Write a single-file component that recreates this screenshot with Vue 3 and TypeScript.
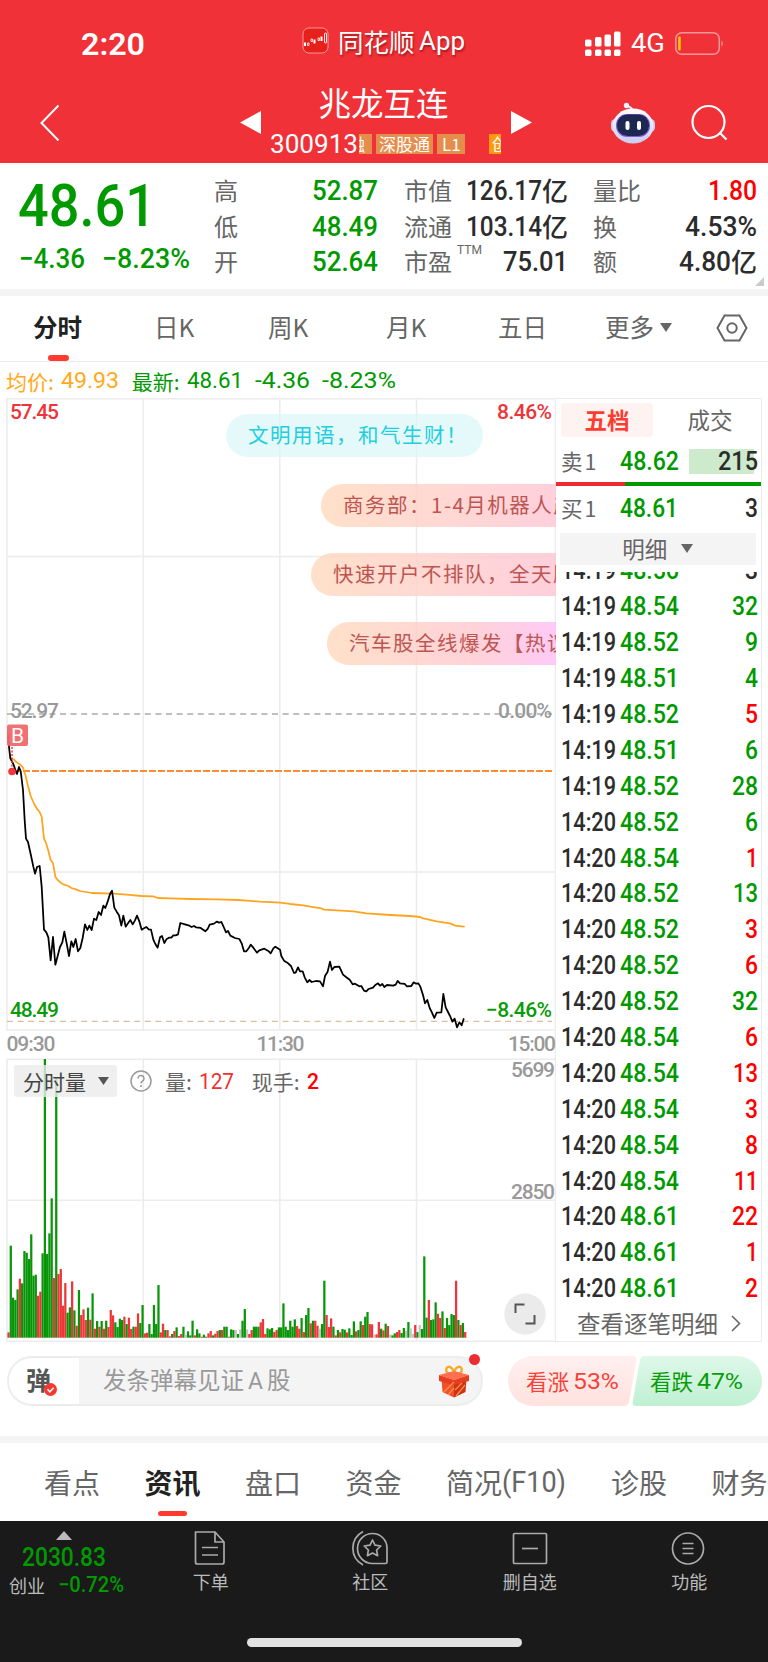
<script setup lang="ts">
import { h, type FunctionalComponent } from 'vue'

interface NumProps { t: string; w: number; s: number; b?: number }

// Condensed numerals: Roboto squeezed to a fixed advance, centred on its cap height.
const Num: FunctionalComponent<NumProps> = (p) =>
  h('svg', { width: p.w, height: p.s, overflow: 'visible', 'font-family': 'Roboto, "Noto Sans CJK SC", sans-serif' }, [
    h('text', {
      x: 0, y: p.s * 0.8555, 'font-size': p.s, 'font-weight': p.b ?? 500,
      fill: 'currentColor', textLength: p.w, lengthAdjust: 'spacingAndGlyphs'
    }, p.t)
  ])
Num.props = ['t', 'w', 's', 'b']

const stats = [
  [
    { k: '高', v: '52.87', w: 66, c: 'down' },
    { k: '低', v: '48.49', w: 66, c: 'down' },
    { k: '开', v: '52.64', w: 66, c: 'down' }
  ],
  [
    { k: '市值', v: '126.17', w: 76, u: '亿' },
    { k: '流通', v: '103.14', w: 76, u: '亿' },
    { k: '市盈', v: '75.01', w: 65, sup: 'TTM' }
  ],
  [
    { k: '量比', v: '1.80', w: 49, c: 'up' },
    { k: '换', v: '4.53%', w: 72 },
    { k: '额', v: '4.80', w: 52, u: '亿' }
  ]
] as { k: string; v: string; w: number; c?: string; u?: string; sup?: string }[][]

type Tick = [string, string, string, string]
const ticks: Tick[] = [
  ['14:19', '48.56', '3', 'ink'],
  ['14:19', '48.54', '32', 'down'], ['14:19', '48.52', '9', 'down'], ['14:19', '48.51', '4', 'down'],
  ['14:19', '48.52', '5', 'up'], ['14:19', '48.51', '6', 'down'], ['14:19', '48.52', '28', 'down'],
  ['14:20', '48.52', '6', 'down'], ['14:20', '48.54', '1', 'up'], ['14:20', '48.52', '13', 'down'],
  ['14:20', '48.52', '3', 'up'], ['14:20', '48.52', '6', 'up'], ['14:20', '48.52', '32', 'down'],
  ['14:20', '48.54', '6', 'up'], ['14:20', '48.54', '13', 'up'], ['14:20', '48.54', '3', 'up'],
  ['14:20', '48.54', '8', 'up'], ['14:20', '48.54', '11', 'up'], ['14:20', '48.61', '22', 'up'],
  ['14:20', '48.61', '1', 'up'], ['14:20', '48.61', '2', 'up']
]
const qtyWidth = (q: string): number => [...q].reduce((n, d) => n + (d === '1' ? 12 : 13), 0)

// Volume per minute: colour letter (r up, g down, n flat) followed by the bar height in thirds of a pixel.
const volume =
  'r16 g276 g120 g113 g145 r177 g163 g260 g255 g236 g310 g186 g189 r126 r138 g253 g836 g251 g313 g418 r179 g778 r191 r206 r96 r164 g75 g91 r169 g82 r36 g143 r68 r85 r53 g90 r54 g133 r27 g50 r33 g50 r27 g51 r32 r83 r67 g46 g32 g57 g53 r63 g41 r60 r26 g33 r33 r73 g44 g98 r13 r15 g41 g11 g98 g41 g158 r16 r42 g23 r23 r4 g11 r20 g31 r5 r11 g33 n8 g19 g7 g51 r7 g25 g13 r3 g9 g3 r13 r20 g7 r12 r20 g23 r23 g33 g33 r3 g25 g23 n23 g11 n25 g51 g86 n25 r11 r23 g33 g33 g33 r46 r56 r11 g28 g25 g29 r17 r23 g31 g31 g103 g33 g23 g51 g33 g55 r35 r27 g59 r17 g68 g89 r43 g51 r51 r36 n27 g41 g171 r68 r32 r58 g33 r7 g23 r16 g26 g24 r16 g28 g8 g49 r19 g23 g49 r38 g63 g77 r41 r40 n9 r10 r47 g27 r22 g42 r35 n9 g7 g13 r17 r23 g14 g29 n20 g47 n28 n11 r38 g17 n38 g26 g244 g60 r113 g53 g55 g106 r72 r59 g79 r29 g59 g38 g71 g68 r171 g53 r38 g44 r17'
const tone: Record<string, string> = { r: '#ee3538', g: '#089608', n: '#c4c4c4' }
const bars = volume.split(' ').map((v, i) => {
  const hgt = Number(v.slice(1)) / 3
  return { x: 7.4 + i * 2.272, y: 939.7 - hgt, h: hgt, fill: tone[v[0]] }
})

const price =
  '24,136 28,180 31,205 40,222 48,245 51,252 57,231 62,243 69,300 74,390 78,446 84,456 92,492 100,530 105,551 111,531 119,528 125,590 132,719 139,727 145,742 152,811 159,741 166,824 173,798 180,771 187,757 193,725 200,760 207,798 214,754 220,771 227,747 234,784 241,774 248,744 255,703 262,720 268,707 275,720 282,686 289,690 296,666 303,675 310,647 316,654 323,635 330,612 336,602 343,653 350,665 357,676 364,707 370,677 377,710 384,700 391,690 398,703 405,691 411,677 418,694 425,719 432,715 439,711 446,718 453,719 460,749 466,762 473,773 480,742 486,738 493,759 500,747 507,743 514,743 520,736 527,736 534,733 541,699 555,703 568,707 575,711 582,708 588,712 602,714 616,724 623,717 629,704 642,701 650,695 657,698 664,696 671,711 678,727 684,723 691,737 705,744 718,747 725,760 732,784 739,784 746,775 752,764 760,773 771,788 778,781 793,776 805,783 812,790 820,775 826,770 832,774 840,779 844,798 852,812 862,818 873,828 882,849 887,848 894,832 900,844 908,844 914,862 922,877 928,870 935,876 948,873 960,874 969,889 975,858 983,845 990,815 996,840 1003,831 1018,830 1029,854 1038,861 1049,869 1058,883 1065,881 1078,889 1084,888 1092,902 1099,904 1106,897 1119,893 1126,885 1134,880 1140,887 1147,882 1153,891 1161,885 1180,887 1187,884 1193,873 1200,880 1214,882 1221,889 1234,888 1241,877 1248,881 1255,880 1261,890 1269,915 1275,940 1282,930 1289,954 1296,968 1303,984 1310,968 1324,967 1330,912 1337,952 1344,966 1351,980 1357,995 1364,986 1371,1012 1378,997 1385,1006 1391,987'
const average =
  '31,203 42,209 50,217 62,225 69,233 76,254 84,288 92,318 104,345 113,359 119,366 125,380 132,446 138,459 145,482 152,510 159,520 166,560 173,570 182,578 190,583 205,588 214,594 230,599 240,603 275,609 340,611 380,614 425,618 460,619 474,624 510,625 570,627 650,628 715,630 740,632 780,635 840,638 870,642 910,646 945,652 964,655 972,659 1010,661 1060,664 1100,670 1170,675 1230,678 1260,681 1270,685 1310,694 1350,700 1366,707 1392,710'

const pills = [
  { t: '商务部：1-4月机器人产量', left: 321, top: 86, kind: 'warm' },
  { t: '快速开户不排队，全天服务', left: 311, top: 155, kind: 'warm' },
  { t: '汽车股全线爆发【热议】', left: 327, top: 224, kind: 'warm rose' }
]
</script>

<template>
  <div class="page">
    <header class="head">
      <div class="status">
        <div class="clock"><Num t="2:20" :w="64" :s="32" :b="600" /></div>
        <div class="brand">
          <svg width="28" height="28" viewBox="0 0 28 28">
            <rect x="1" y="1" width="25" height="25" rx="6" fill="#e8201c" stroke="#fff" stroke-opacity=".5" />
            <g fill="none" stroke="#fff">
              <path d="M3 15.500v3.500M12.500 12.500v4M19.500 9.500v4.500" stroke-width="2" />
              <path d="M5.500 17v1.500h1.500V16H5.500zM9 12v2.500h1.500V12zM16 11v2.500h1.500V11z" stroke-width=".8" />
              <rect x="22.500" y="6" width="2" height="10" rx="1" stroke-width=".9" />
            </g>
          </svg>
          <span>同花顺<Num t="App" :w="46" :s="25.500" :b="400" /></span>
        </div>
        <div class="signal">
          <svg width="36" height="26" viewBox="0 0 36 26" fill="#fff">
            <rect x="0" y="8.500" width="6.500" height="7" rx="1.500" /><rect x="10" y="6" width="6.500" height="9.500" rx="1.500" />
            <rect x="19.500" y="3.500" width="6.500" height="12" rx="1.500" /><rect x="29" y="0.500" width="6.500" height="15" rx="1.500" />
            <rect x="0" y="18.500" width="6.500" height="6.500" rx="1.500" /><rect x="10" y="18.500" width="6.500" height="6.500" rx="1.500" />
            <rect x="19.500" y="18.500" width="6.500" height="6.500" rx="1.500" /><rect x="29" y="18.500" width="6.500" height="6.500" rx="1.500" />
          </svg>
          <Num t="4G" :w="34" :s="25" :b="400" />
          <svg width="50" height="24" viewBox="0 0 50 24">
            <rect x=".8" y=".8" width="43.500" height="21.500" rx="6" fill="none" stroke="#fff" stroke-opacity=".5" stroke-width="1.500" />
            <rect x="3.200" y="4.500" width="2.500" height="14" rx="1" fill="#ffcf0a" />
            <path d="M46.500 8.500a4 4 0 0 1 0 6z" fill="#fff" fill-opacity=".5" />
          </svg>
        </div>
      </div>
      <div class="bar">
        <svg class="back" width="20" height="38" viewBox="0 0 20 38"><path d="M18.500 1.500 1.500 19l17 17.500" fill="none" stroke="#fff" stroke-width="2" /></svg>
        <svg class="prev" width="21" height="23" viewBox="0 0 21 23"><path d="M21 0v23L0 11.500z" fill="#fff" /></svg>
        <div class="title">
          <h1>兆龙互连</h1>
          <div class="sub">
            <Num t="300913" :w="88" :s="25.500" :b="400" />
            <div class="tags"><i class="cut"><b>融</b></i><i>深股通</i><i class="l1">L1</i><i class="last">创</i></div>
          </div>
        </div>
        <svg class="next" width="21" height="23" viewBox="0 0 21 23"><path d="M0 0v23l21-11.500z" fill="#fff" /></svg>
        <svg class="robot" width="44" height="42" viewBox="0 0 44 42">
          <defs><linearGradient id="shell" x2="0" y2="1"><stop stop-color="#fff" /><stop offset="1" stop-color="#c8ccef" /></linearGradient></defs>
          <path d="M21 8c0-4-4-2.500-6-5" fill="none" stroke="#e3e3fa" stroke-width="2" />
          <circle cx="15.500" cy="3.500" r="2.700" fill="#f4f4ff" />
          <rect x="0" y="17" width="10" height="13" rx="4.500" fill="#c8cdf0" /><rect x="34" y="17" width="10" height="13" rx="4.500" fill="#c8cdf0" />
          <ellipse cx="22" cy="24" rx="20.500" ry="17.500" fill="url(#shell)" />
          <rect x="5" y="12" width="34" height="23" rx="11" fill="#8658e5" />
          <rect x="6" y="12.500" width="32" height="21.500" rx="10.500" fill="#1d2850" />
          <rect x="14.500" y="19" width="4" height="9" rx="2" fill="#fff" /><rect x="26" y="19" width="4" height="9" rx="2" fill="#fff" />
        </svg>
        <svg class="search" width="38" height="38" viewBox="0 0 38 38" fill="none" stroke="#fff" stroke-width="2.200"><circle cx="17.500" cy="18" r="16" /><path d="m28.500 28.500 7 7" /></svg>
      </div>
    </header>

    <section class="quote">
      <div class="last-price">
        <Num class="big" t="48.61" :w="138" :s="60" />
        <div class="chg"><Num t="−4.36" :w="66" :s="27.500" /><Num t="−8.23%" :w="88" :s="27.500" /></div>
      </div>
      <div v-for="(col, ci) in stats" :key="ci" class="col">
        <div v-for="s in col" :key="s.k" class="stat">
          <span class="k">{{ s.k }}<sup v-if="s.sup">{{ s.sup }}</sup></span>
          <span class="v" :class="s.c"><Num :t="s.v" :w="s.w" :s="28" />{{ s.u }}</span>
        </div>
      </div>
      <svg class="corner" width="9" height="9"><path d="M9 0v9H0z" fill="#ccc" /></svg>
    </section>

    <nav class="periods">
      <span class="on">分时</span><span>日K</span><span>周K</span><span>月K</span><span>五日</span>
      <span class="more">更多<svg width="12" height="9"><path d="M0 0h12L6 9z" fill="#666" /></svg></span>
      <svg class="hex" width="32" height="28" viewBox="0 0 32 28" fill="none" stroke="#666" stroke-width="2"><path d="M8.500 1.500h15L30.500 14l-7 12.500h-15L1.500 14z" /><circle cx="16" cy="14" r="4.700" /></svg>
    </nav>

    <div class="legend">
      <span class="avg">均价: <Num t="49.93" :w="58" :s="21.500" :b="400" /></span>
      <span class="new">最新: <Num t="48.61" :w="56" :s="21.500" :b="400" /><Num t="-4.36" :w="55" :s="21.500" :b="400" /><Num t="-8.23%" :w="74" :s="21.500" :b="400" /></span>
    </div>

    <main class="market">
      <div class="chart">
        <svg class="plot" width="556" height="944" viewBox="0 0 556 944" font-family="Roboto, 'Noto Sans CJK SC', sans-serif" font-size="21" font-weight="500">
          <g fill="none" stroke="#ececec" stroke-width="1.500">
            <path d="M7 .7h548.500V632H7zM7 158.500h548M7 474h548M143.300 0v632M279.800 0v632M416.500 0v632" />
            <path d="M7 661.300h548.500v282H7zM7 802.300h548M143.300 661v282M279.800 661v282M416.500 661v282" />
          </g>
          <path d="M555.500 632v30" stroke="#ececec" stroke-width="1.500" />
          <path d="M7 316h545" stroke="#aaa" stroke-width="1.400" stroke-dasharray="6 4.600" />
          <path d="M7 623.400h545" stroke="#d9bfa0" stroke-width="1.200" stroke-dasharray="6 4.600" />
          <path d="M14 373h538" stroke="#ff8c33" stroke-width="2" stroke-dasharray="7 2" />
          <g transform="translate(0 292) scale(.33333)" fill="none" stroke-linejoin="round" stroke-linecap="round" stroke-width="5.300">
            <polyline :points="average" stroke="#ffa41f" />
            <polyline :points="price" stroke="#000" />
          </g>
          <circle cx="12" cy="373.500" r="3.800" fill="#f0383b" />
          <path d="M12 349v20" stroke="#f0383b" stroke-width="1.500" stroke-dasharray="2 1.500" />
          <rect x="7" y="326.500" width="21" height="21.500" rx="2" fill="#f0686a" fill-opacity=".95" />
          <text x="11" y="345" fill="#fff" font-size="21" font-weight="400">B</text>
          <rect v-for="(b, i) in bars" :key="i" :x="b.x" :y="b.y" width="2.250" :height="b.h" :fill="b.fill" />
          <g fill="#ee3438"><text x="10" y="20.500" textLength="49">57.45</text><text x="497" y="20.500" textLength="55">8.46%</text></g>
          <g fill="#999">
            <text x="10" y="320" textLength="49">52.97</text><text x="498" y="320" textLength="54">0.00%</text>
            <text x="6.500" y="652.500" textLength="49">09:30</text><text x="256.500" y="652.500" textLength="48">11:30</text><text x="508" y="652.500" textLength="48">15:00</text>
            <text x="511" y="678.500" textLength="44">5699</text><text x="511" y="800.500" textLength="44">2850</text>
          </g>
          <g fill="#089c08"><text x="10" y="618.500" textLength="49">48.49</text><text x="486" y="618.500" textLength="66">−8.46%</text></g>
        </svg>
        <div class="pill calm">文明用语，和气生财！</div>
        <div v-for="p in pills" :key="p.t" class="pill" :class="p.kind" :style="{ left: p.left + 'px', top: p.top + 'px' }">{{ p.t }}</div>
        <div class="vol">
          <span class="pick">分时量<svg width="11" height="8"><path d="M0 0h11L5.500 8z" fill="#555" /></svg></span>
          <svg class="help" width="22" height="22" viewBox="0 0 22 22" fill="none" stroke="#999" stroke-width="1.500"><circle cx="11" cy="11" r="10" /><path d="M8 8.500a3 3 0 1 1 4.700 2.400c-1.100.8-1.700 1.200-1.700 2.600M11 15v2" /></svg>
          <span class="lab">量: <Num class="r1" t="127" :w="35" :s="22" :b="400" /></span>
          <span class="lab">现手: <Num class="r2" t="2" :w="12" :s="22" /></span>
        </div>
        <svg class="full" width="42" height="42" viewBox="0 0 42 42"><circle cx="21" cy="21" r="20.700" fill="#ebebeb" /><path d="M11.500 20v-8.500h9M30.500 22v8.500h-9" fill="none" stroke="#555" stroke-width="2" /></svg>
      </div>

      <aside class="book">
        <div class="switch"><span class="on">五档</span><span>成交</span></div>
        <div class="level"><span>卖1</span><Num class="down" t="48.62" :w="59" :s="25" /><b class="depth"><Num t="215" :w="40" :s="25" /></b></div>
        <div class="ratio"><i /></div>
        <div class="level buy"><span>买1</span><Num class="down" t="48.61" :w="58" :s="25" /><b><Num t="3" :w="13" :s="25" /></b></div>
        <div class="detail">明细<svg width="12" height="9"><path d="M0 0h12L6 9z" fill="#666" /></svg></div>
        <div class="ticks">
          <div v-for="(t, i) in ticks" :key="i" class="tick">
            <Num :t="t[0]" :w="55" :s="25" /><Num class="down" :t="t[1]" :w="59" :s="25" /><Num class="q" :class="t[3]" :t="t[2]" :w="qtyWidth(t[2])" :s="25" />
          </div>
        </div>
        <div class="all">查看逐笔明细<svg width="10" height="17" viewBox="0 0 10 17"><path d="m1 1 7.500 7.500L1 16" fill="none" stroke="#666" stroke-width="1.600" /></svg></div>
      </aside>
    </main>

    <section class="talk">
      <div class="input">
        <span class="dan">弹<svg width="13" height="13" viewBox="0 0 13 13"><circle cx="6.500" cy="6.500" r="6.500" fill="#f6382f" /><path d="m3.500 6.300 2.300 2.500 3.900-4" fill="none" stroke="#fff" stroke-width="1.500" /></svg></span>
        <span class="hint">发条弹幕见证<Num t="A" :w="15" :s="23" :b="400" />股</span>
        <svg class="gift" width="30" height="34" viewBox="0 0 30 34">
          <path d="M15 10C10 11 6 8 7.500 4.500 9 1 14 3 15 9c1-6 6-8 7.500-4.500C24 8 20 11 15 10z" fill="none" stroke="#f5ac25" stroke-width="2.300" />
          <path d="m0 11 15-4 15 4-15 5z" fill="#ff704f" /><path d="M2.500 14 15 17v16.500L3.500 28z" fill="#f0502e" /><path d="M27.500 14 15 17v16.500L26.500 28z" fill="#cf3016" />
          <path d="m0 11 15 5 15-5v6l-15 4-15-4z" fill="#e83d20" /><path d="m5 28 10-10M9 31l6-7M17 32l9-11M16 26l7-7" stroke="#ff9245" stroke-width="1.200" />
        </svg>
        <i class="dot" />
      </div>
      <div class="votes">
        <svg width="254" height="50" viewBox="0 0 254 50">
          <defs>
            <linearGradient id="bull" x2="0" y2="1"><stop stop-color="#fff0ef" /><stop offset="1" stop-color="#ffe2de" /></linearGradient>
            <linearGradient id="bear" x2="0" y2="1"><stop stop-color="#dff8e9" /><stop offset="1" stop-color="#bff0d2" /></linearGradient>
          </defs>
          <path d="M25 0h99.500q4.500 0 3.800 4L121 46q-.8 4-5 4H25a25 25 0 0 1 0-50z" fill="url(#bull)" />
          <path d="M137 0h92a25 25 0 0 1 0 50H128q-4 0-3.300-4L132 4q.9-4 5-4z" fill="url(#bear)" />
        </svg>
        <div class="vt"><span class="bull">看涨<Num t="53%" :w="46" :s="22" :b="400" /></span><span class="bear">看跌<Num t="47%" :w="46" :s="22" :b="400" /></span></div>
      </div>
    </section>

    <nav class="topics">
      <span>看点</span><span class="on">资讯</span><span>盘口</span><span>资金</span><span class="f10">简况<Num t="(F10)" :w="64" :s="29" :b="400" /></span><span>诊股</span><span>财务</span>
    </nav>

    <footer class="dock">
      <div class="index">
        <svg width="16" height="9"><path d="M8 0l8 9H0z" fill="#bbb" /></svg>
        <Num class="down" t="2030.83" :w="84" :s="25" />
        <div><span>创业</span><Num class="down" t="−0.72%" :w="66" :s="21.500" /></div>
      </div>
      <div class="item">
        <svg width="38" height="36" viewBox="0 0 38 36"><path d="M3.500 2h19.500l9 10v20a2 2 0 0 1-2 2H5.500a2 2 0 0 1-2-2zM23 2v10h9M10 17.500h16M10 25h16" /></svg>下单
      </div>
      <div class="item">
        <svg width="38" height="36" viewBox="0 0 38 36"><path d="M21.500 3.500A14.500 14.500 0 0 1 36 18v14a1.500 1.500 0 0 1-1.500 1.500h-13a15 15 0 0 1 0-30zM12 1.500C-1.500 9-1.500 27.500 12 35M21.500 10l2.500 5.200 5.800.8-4.200 4 1 5.700-5.100-2.700-5.100 2.700 1-5.700-4.200-4 5.800-.8z" /></svg>社区
      </div>
      <div class="item">
        <svg width="38" height="36" viewBox="0 0 38 36"><rect x="2.500" y="3.500" width="33" height="30" rx="1" /><path d="M11 18.500h16" /></svg>删自选
      </div>
      <div class="item">
        <svg width="38" height="36" viewBox="0 0 38 36"><circle cx="18" cy="18.500" r="15.500" /><path d="M12.500 13.500h11M12.500 18.500h11M12.500 23.500h11" /></svg>功能
      </div>
      <i class="home" />
    </footer>
  </div>
</template>

<style>
body { background: #fff; }
</style>

<style scoped>
.page { width: 768px; height: 1662px; overflow: hidden; display: flex; flex-direction: column; background: #fff; color: #666; font-family: "Noto Sans CJK SC", sans-serif; font-size: 24px; line-height: 1; }
.page * { box-sizing: border-box; }
.page span, .page div { white-space: nowrap; }
svg { flex: none; display: block; }
i, b { font-style: normal; font-weight: inherit; }
.down { color: #009a00; }
.up { color: #f00; }
.ink { color: #2c2c2c; }

.head { height: 163px; background: #f03137; color: #fff; flex: none; }
.status { height: 86px; display: flex; align-items: center; padding-top: 1px; }
.clock { margin-left: 81px; width: 221px; }
.brand { width: 283px; display: flex; align-items: center; gap: 8px; height: 82px; margin-bottom: 6px; }
.brand span { display: flex; align-items: center; gap: 4px; font-size: 25.500px; text-shadow: 1px 2px 2px rgba(80, 0, 0, .45); }
.signal { display: flex; align-items: center; gap: 10px; }
.bar { display: flex; }
.bar > * { flex: none; }
.back { margin: 18px 0 0 40px; }
.prev { margin: 25px 0 0 180px; }
.title { width: 231px; margin: 0 10px 0 9px; }
h1 { font-size: 32.5px; font-weight: 400; margin: -1px 0 0; text-align: center; padding-right: 4px; line-height: 34px; }
.sub { display: flex; align-items: center; margin-top: 12px; height: 26px; }
.tags { display: flex; gap: 4px; width: 143px; overflow: hidden; margin-left: 1px; }
.tags i { background: #e58d4a; font-size: 17px; height: 20px; line-height: 19px; padding: 0 3px; width: 57px; flex: none; }
.tags .cut { width: 13px; display: flex; justify-content: flex-end; overflow: hidden; padding: 0 7px 0 0; }
.tags .l1 { width: 28px; padding: 0 5px; }
.tags .last { margin-left: 20px; background: #ff9a10; width: 30px; }
.next { margin-top: 25px; }
.robot { margin: 16px 0 0 79px; }
.search { margin: 18px 0 0 36px; }

.quote { height: 133px; display: flex; position: relative; border-bottom: 7px solid #f4f4f4; padding-top: 9px; flex: none; }
.last-price { width: 214px; padding: 3px 0 0 18px; color: #009a00; flex: none; }
.chg { display: flex; gap: 17px; margin: 9px 0 0 1px; }
.col { width: 164px; margin-right: 26px; flex: none; }
.col:nth-child(3) { margin-right: 25px; }
.col:nth-child(4) { margin-right: 0; }
.stat { height: 35.700px; display: flex; justify-content: space-between; align-items: center; font-size: 24px; }
.k { position: relative; }
.v { display: flex; align-items: center; font-weight: 500; font-size: 26px; }
.v:not(.up):not(.down) { color: #2c2c2c; }
sup { position: absolute; left: 53px; top: -5px; font-size: 12px; line-height: 12px; font-family: Roboto, sans-serif; }
.corner { position: absolute; right: 4px; bottom: 3px; }

.periods { height: 66px; display: flex; border-bottom: 1.500px solid #ececec; flex: none; padding: 0 20px 2px 0; align-items: center; position: relative; font-size: 24.500px; }
.periods span { flex: none; }
.periods span:nth-child(1) { width: 122px; padding-left: 33px; }
.periods span:nth-child(2) { width: 114px; margin-left: 32px; }
.periods span:nth-child(3) { width: 118px; }
.periods span:nth-child(4) { width: 112px; }
.periods span:nth-child(5) { width: 107px; }
.more { display: flex; align-items: center; gap: 6px; }
.hex { margin-left: auto; }
.periods .on { color: #222; font-weight: 700; }
.periods .on::after { content: ""; position: absolute; left: 48px; bottom: 0; width: 21px; height: 6px; border-radius: 3px; background: #ff3b30; }

.legend { height: 36px; display: flex; align-items: center; padding: 2px 0 0 6px; font-size: 21px; gap: 13px; flex: none; }
.legend span { display: flex; align-items: center; gap: 7px; }
.avg { color: #ffaa1c; }
.new { color: #009a00; }
.new svg + svg { margin-left: 5px; }

.market { height: 944px; display: flex; flex: none; }
.chart { width: 556px; position: relative; overflow: hidden; flex: none; }
.pill { position: absolute; height: 43px; border-radius: 22px; padding: 0 22px; line-height: 41px; font-size: 20.500px; letter-spacing: 1.500px; }
.calm { left: 226px; top: 16px; width: 256.500px; background: rgba(218, 246, 250, .7); color: #21cfdf; }
.warm { width: 330px; background: linear-gradient(90deg, rgba(255, 218, 190, .82), rgba(255, 198, 212, .82) 70%); color: #bd5552; }
.rose { background: linear-gradient(90deg, rgba(255, 218, 190, .82), rgba(255, 200, 208, .82) 45%, rgba(255, 190, 245, .82) 70%); }
.vol { position: absolute; left: 14px; top: 667px; height: 32px; display: flex; align-items: center; font-size: 21px; }
.pick { background: rgba(235, 235, 235, .8); height: 32px; width: 103px; padding-left: 9px; border-radius: 3px; color: #444; display: flex; align-items: center; gap: 12px; }
.help { margin: 0 13px; }
.lab { display: flex; align-items: center; gap: 7px; margin-right: 18px; }
.r1 { color: #f0302f; }
.r2 { color: #f00; }
.full { position: absolute; left: 504px; top: 895px; }

.book { width: 205.500px; border: 1.500px solid #ececec; border-left: 0; display: flex; flex-direction: column; flex: none; }
.switch { display: flex; padding: 4px 0 0 5px; font-size: 22.500px; }
.switch span { width: 92px; height: 34px; line-height: 32px; text-align: center; border-radius: 4px; margin-right: 11px; flex: none; }
.switch span + span { margin-right: 0; }
.switch .on { background: #fff3f2; color: #ff3b30; font-weight: 700; }
.level { height: 45px; display: flex; align-items: center; padding: 3px 3px 0 5px; font-size: 21.500px; }
.level span { width: 59px; letter-spacing: 2px; }
.level b { margin-left: auto; color: #2c2c2c; }
.level .depth { background: linear-gradient(90deg, #cdeacd 65px, transparent 65px); width: 69px; padding-left: 29px; }
.ratio { height: 4px; background: #009a00; flex: none; }
.ratio i { display: block; height: 4px; width: 69px; background: #ee2b30; }
.buy { height: 47px; padding-top: 0; padding-bottom: 3px; }
.detail { background: #f4f4f4; margin: 0 5px 0 4px; height: 32px; display: flex; justify-content: center; align-items: center; gap: 14px; font-size: 22.500px; padding-bottom: 2px; }
.ticks { margin-top: 7px; height: 734px; overflow: hidden; }
.tick { height: 35.900px; display: flex; align-items: center; padding: 0 3px 0 5px; gap: 4px; color: #2c2c2c; }
.tick:first-child { margin-top: -19px; }
.q { margin-left: auto; }
.all { display: flex; align-items: center; padding: 6px 0 0 21px; gap: 13px; font-size: 23.500px; }

.talk { height: 101px; border-bottom: 7px solid #f4f4f4; display: flex; padding: 14px 0 0 7px; flex: none; }
.input { width: 476px; height: 50px; border: 2px solid #ededed; border-radius: 25px; display: flex; align-items: center; position: relative; background: linear-gradient(90deg, #fff 70px, #f4f4f4 70px); flex: none; }
.dan { width: 94px; padding-left: 17px; font-weight: 700; font-size: 25px; color: #555; position: relative; top: -2px; }
.dan svg { position: absolute; left: 35px; top: 16px; }
.hint { display: flex; align-items: center; gap: 4px; color: #999; font-size: 23.500px; position: relative; top: -1px; }
.gift { position: absolute; left: 430px; top: 6px; }
.dot { position: absolute; right: 1px; top: -4px; width: 11px; height: 11px; border-radius: 50%; background: #ec2c30; }
.votes { margin-left: 25px; position: relative; height: 50px; }
.vt { position: absolute; inset: 0; display: flex; align-items: center; font-size: 21.500px; }
.vt span { display: flex; gap: 4px; align-items: center; margin-left: 18px; width: 106px; }
.bull { color: #fa4038; }
.vt .bear { color: #089c08; }

.topics { height: 78px; flex: none; display: flex; font-size: 28px; padding: 0 0 1px 44px; align-items: center; position: relative; }
.topics span { width: 100.500px; flex: none; }
.topics .f10 { width: 165px; display: flex; align-items: center; }
.topics .on { color: #222; font-weight: 700; }
.topics .on::after { content: ""; position: absolute; left: 158px; bottom: 5px; width: 29px; height: 5.500px; border-radius: 3px; background: #ff3b30; }

.dock { flex: 1; background: #1a1a1a; display: flex; position: relative; color: #bbb; }
.index { width: 131px; flex: none; display: flex; flex-direction: column; align-items: center; padding: 10px 3px 0 0; }
.index > svg:nth-child(2) { margin: 5px 0 4px; }
.index div { display: flex; align-items: center; gap: 13px; font-size: 18px; padding-left: 5px; }
.item { width: 159.500px; flex: none; display: flex; flex-direction: column; align-items: center; font-size: 18px; padding-top: 9px; gap: 6px; }
.item svg { fill: none; stroke: #aaa; stroke-width: 1.700; stroke-linejoin: round; }
.home { position: absolute; left: 247px; bottom: 15px; width: 275px; height: 9px; border-radius: 5px; background: #e2e2e2; }
</style>
